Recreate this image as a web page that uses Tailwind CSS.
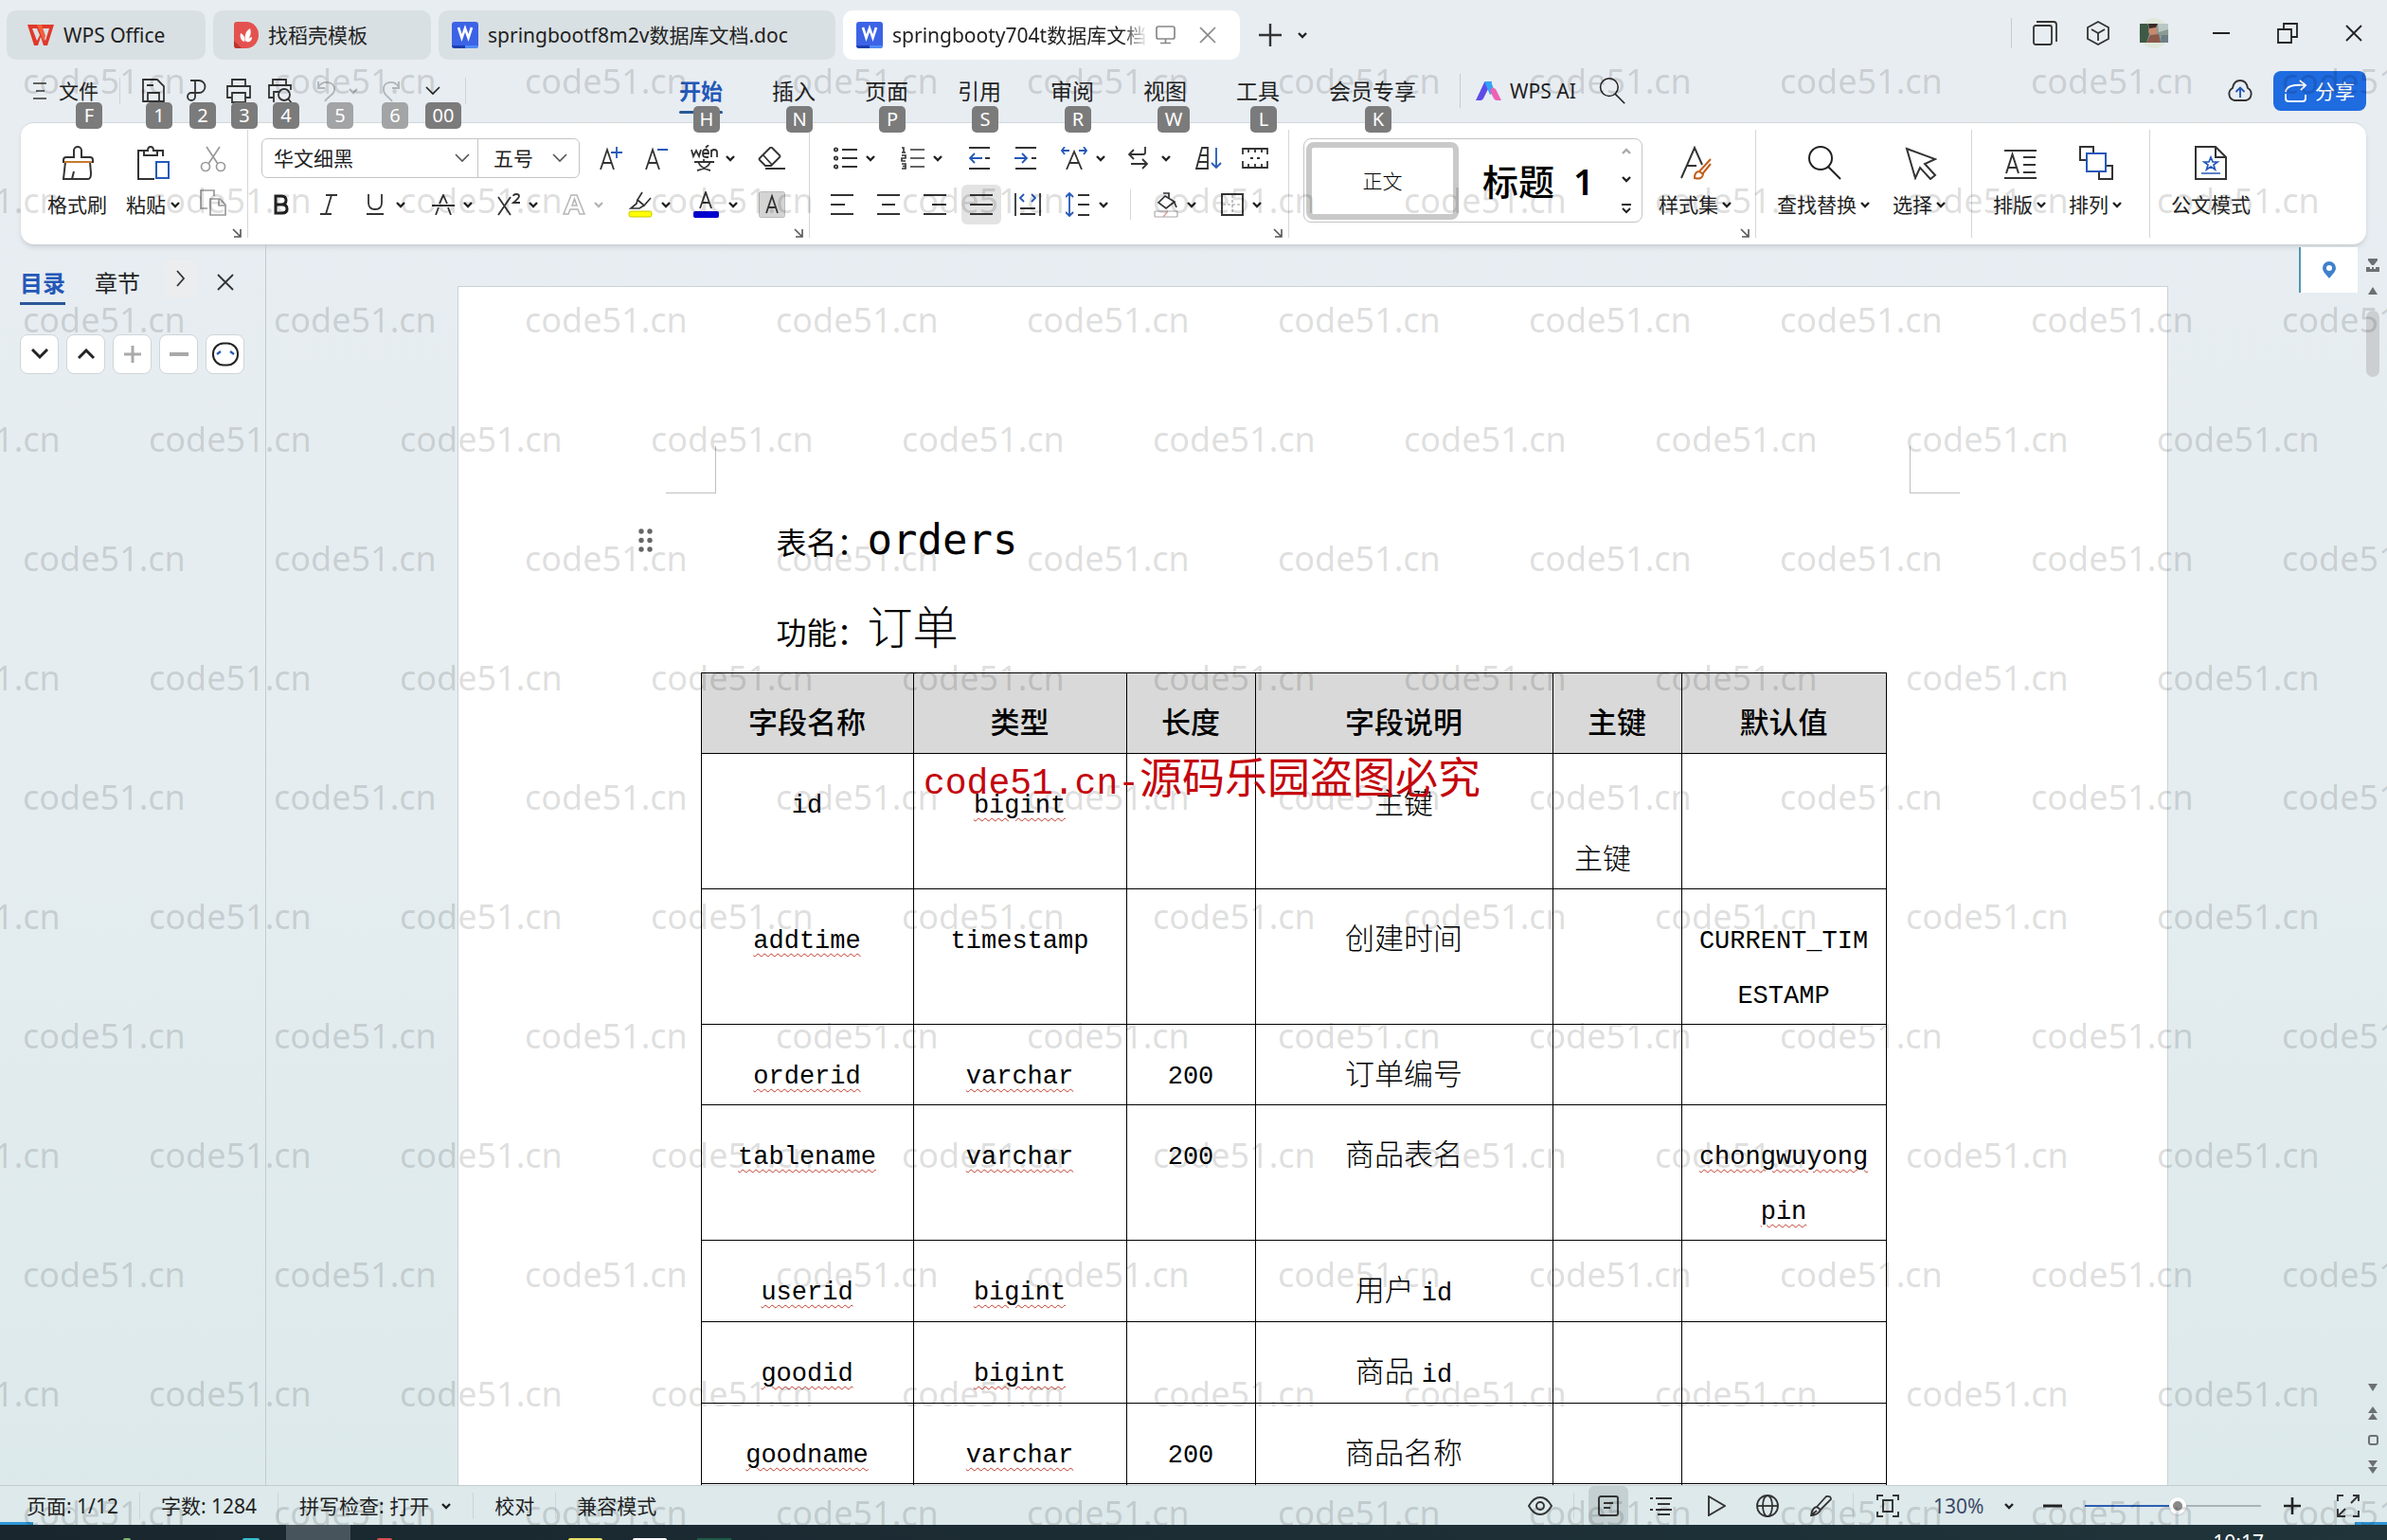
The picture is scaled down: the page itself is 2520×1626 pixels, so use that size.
<!DOCTYPE html>
<html lang="zh-CN">
<head>
<meta charset="utf-8">
<title>springbooty704t数据库文档 - WPS Office</title>
<script src="https://cdn.jsdelivr.net/npm/@tailwindcss/browser@4"></script>
</head>
<body class="relative flex h-screen flex-col overflow-hidden bg-linear-to-b from-[#e8edf2] via-[#e5edf0] to-[#dce9eb] font-['Noto_Sans','Noto_Sans_CJK_SC',sans-serif] text-[21px] leading-7 text-[#222]">

<svg class="hidden">
  <symbol id="chev" viewBox="0 0 12 8"><path d="M2 2l4 4 4-4" fill="none" stroke="currentColor" stroke-width="2.4"/></symbol>
  <symbol id="thin" viewBox="0 0 16 10"><path d="M1 1l7 7 7-7" fill="none" stroke="currentColor" stroke-width="1.6"/></symbol>
  <symbol id="corner" viewBox="0 0 10 10"><path d="M1 1l7 7M9 1v8H2" fill="none" stroke="#555" stroke-width="1.6"/></symbol>
  <symbol id="word" viewBox="0 0 28 28"><rect width="28" height="28" rx="3" fill="#3c63e6"/><path d="M0 25h14v3H3a3 3 0 0 1-3-3z" fill="#1c3fb0"/><path d="M14 25h14a3 3 0 0 1-3 3H14z" fill="#4f8bf5"/><path d="M7 6l3.500 11L14 7l3.500 10L21 6" fill="none" stroke="#fff" stroke-width="2.600"/></symbol>
  <symbol id="lens" viewBox="0 0 36 36"><circle cx="14" cy="13" r="12" fill="none" stroke="currentColor" stroke-width="2"/><path d="M22 22l13 13" stroke="currentColor" stroke-width="2"/></symbol>
</svg>

<!-- Document tabs -->
<header class="flex h-[63px] shrink-0 items-end gap-2 pl-[7px] whitespace-nowrap">
  <button class="flex h-[52px] w-[210px] items-center gap-[10px] rounded-[10px] bg-[#d9e0e3] pl-[22px]">
    <svg class="h-6 w-7" viewBox="0 0 28 24"><path d="M0 1h28l-7 22h-4l-3-9-3 9H7z" fill="#e0382c"/><path d="M5 5h5l3 7-3 6zM15 5h8l-4 13-3-7z" fill="#d9e0e3"/><path d="M10 1h5l4 12-2 6z" fill="#f0603a"/></svg>
    WPS Office
  </button>
  <button class="flex h-[52px] w-[230px] items-center gap-[10px] rounded-[10px] bg-[#d9e0e3] pl-[22px]">
    <svg class="h-7 w-[26px]" viewBox="0 0 26 28"><path d="M3 0h10a13 14 0 0 1 0 28H3a3 3 0 0 1-3-3V3a3 3 0 0 1 3-3z" fill="#e4524f"/><path d="M0 20l8 8H3a3 3 0 0 1-3-3z" fill="#b93530"/><path d="M12 21c-1-6 0-11 5-14 2 6 0 10-5 14zM11 21c-4-1-5-5-4-9 4 2 5 5 4 9zM13 21c1-3 3-4 6-5 0 4-2 6-6 5z" fill="#fff"/></svg>
    找稻壳模板
  </button>
  <button class="flex h-[52px] w-[419px] items-center gap-[10px] rounded-[10px] bg-[#d9e0e3] pl-[14px]">
    <svg class="size-7"><use href="#word"/></svg>springbootf8m2v数据库文档.doc
  </button>
  <div class="flex h-[52px] w-[419px] items-center rounded-[10px] bg-white pl-[14px]">
    <svg class="size-7 shrink-0"><use href="#word"/></svg>
    <span class="ml-[10px] w-[270px] overflow-hidden mask-r-from-90%">springbooty704t数据库文档.doc</span>
    <svg class="ml-2 h-5 w-[22px]" viewBox="0 0 22 20" fill="none" stroke="#888" stroke-width="1.700"><rect x="1" y="1" width="19" height="13" rx="2"/><path d="M10.500 14v4M5 18.500h11"/></svg>
    <button aria-label="关闭标签" class="ml-6"><svg class="size-[18px]" viewBox="0 0 18 18"><path d="M1 1l16 16M17 1L1 17" stroke="#888" stroke-width="1.700"/></svg></button>
  </div>
  <button aria-label="新建" class="ml-3 flex h-[52px] items-center"><svg class="size-6" viewBox="0 0 24 24"><path d="M12 0v24M0 12h24" stroke="#333" stroke-width="2.400"/></svg></button>
  <button aria-label="标签列表" class="ml-2 flex h-[52px] items-center"><svg class="h-2 w-3"><use href="#chev"/></svg></button>
  <div class="mr-[26px] ml-auto flex h-[52px] items-center text-[#333]">
    <i class="mb-1 h-8 w-px bg-[#c5cbcf]"></i>
    <button aria-label="窗口" class="mb-1 ml-[22px]"><svg class="size-[26px]" viewBox="0 0 26 26" fill="none" stroke="currentColor" stroke-width="1.800"><rect x="1" y="5" width="19" height="20" rx="2"/><path d="M4 1h18a3 3 0 0 1 3 3v18"/></svg></button>
    <button aria-label="应用" class="mb-1 ml-[30px]"><svg class="size-[26px]" viewBox="0 0 26 26" fill="none" stroke="currentColor" stroke-width="1.800"><path d="M13 1l11 6v12l-11 6-11-6V7zM6 9l7 4 7-4M13 13v8"/></svg></button>
    <button aria-label="账户" class="mb-1 ml-[30px]"><svg class="h-9 w-8" viewBox="0 0 32 36"><circle cx="16" cy="18" r="16" fill="#dfe8dc"/><path d="M1 8h30v20H1z" fill="#8b9a92"/><path d="M1 8h8l3 8-4 12H1z" fill="#3d5a46"/><path d="M20 8h11v6l-10 3z" fill="#b9c8c4"/><path d="M11 10h8v9l-5 3-4-5z" fill="#c58a70"/><path d="M10 8h10l-2 4-7 1z" fill="#3b2b28"/><path d="M8 28l4-8 9-1 2 9z" fill="#8a5a4a"/><path d="M24 20h7v8h-8z" fill="#6c7f86"/></svg></button>
    <button aria-label="最小化" class="mb-1 ml-[46px]"><svg class="h-1 w-[18px]" viewBox="0 0 18 4"><path d="M0 2h18" stroke="#222" stroke-width="2"/></svg></button>
    <button aria-label="还原" class="mb-1 ml-[50px]"><svg class="size-[22px]" viewBox="0 0 22 22" fill="none" stroke="#222" stroke-width="1.800"><path d="M1 7h14v14H1zM7 7V1h14v14h-6"/></svg></button>
    <button aria-label="关闭" class="mb-1 ml-[50px]"><svg class="size-[18px]" viewBox="0 0 18 18"><path d="M1 1l16 16M17 1L1 17" stroke="#222" stroke-width="1.800"/></svg></button>
  </div>
</header>

<!-- Quick access and ribbon tabs -->
<nav class="relative z-10 flex h-[66px] shrink-0 items-center pl-[34px] whitespace-nowrap">
  <button class="relative flex h-[66px] items-center gap-3">
    <svg class="h-[18px] w-4" viewBox="0 0 16 18"><path d="M1 1h14M4 9h9M1 17h14" stroke="#333" stroke-width="1.700"/></svg>文件
    <kbd class="absolute top-[45px] right-[-4px] h-7 min-w-7 rounded-[5px] bg-[#7b7b7b] px-1 text-center font-[inherit] text-xl text-white">F</kbd>
  </button>
  <i class="mx-[22px] h-7 w-px bg-[#cdd3d7]"></i>
  <button aria-label="保存" class="relative flex h-[66px] w-[46px] items-center">
    <svg class="size-[26px]" viewBox="0 0 26 26" fill="none" stroke="#333" stroke-width="1.800"><path d="M2 1h15l7 7v16H2zM7 24v-9h12v9M6 7h7"/></svg>
    <kbd class="absolute top-[45px] left-[5px] h-7 min-w-7 rounded-[5px] bg-[#7b7b7b] px-1 text-center font-[inherit] text-xl text-white">1</kbd>
  </button>
  <button aria-label="输出为PDF" class="relative flex h-[66px] w-[44px] items-center">
    <svg class="size-[26px]" viewBox="0 0 26 26" fill="none" stroke="#333" stroke-width="1.800"><path d="M6 2h9a6 6 0 0 1 0 13H7a4 4 0 1 0 4 4V2"/></svg>
    <kbd class="absolute top-[45px] left-[5px] h-7 min-w-7 rounded-[5px] bg-[#7b7b7b] px-1 text-center font-[inherit] text-xl text-white">2</kbd>
  </button>
  <button aria-label="打印" class="relative flex h-[66px] w-[44px] items-center">
    <svg class="size-[26px]" viewBox="0 0 26 26" fill="none" stroke="#333" stroke-width="1.800"><path d="M6 8V1h14v7M6 20H1V8h24v12h-5M6 15h14v10H6z"/></svg>
    <kbd class="absolute top-[45px] left-[5px] h-7 min-w-7 rounded-[5px] bg-[#7b7b7b] px-1 text-center font-[inherit] text-xl text-white">3</kbd>
  </button>
  <button aria-label="打印预览" class="relative flex h-[66px] w-[52px] items-center">
    <svg class="size-[26px]" viewBox="0 0 26 26" fill="none" stroke="#333" stroke-width="1.800"><path d="M5 7V1h14v6M5 20H1V7h23v5M6 25V14h5"/><circle cx="17" cy="17" r="6"/><path d="M21 21l4 5"/></svg>
    <kbd class="absolute top-[45px] left-[5px] h-7 min-w-7 rounded-[5px] bg-[#7b7b7b] px-1 text-center font-[inherit] text-xl text-white">4</kbd>
  </button>
  <button aria-label="撤消" class="relative flex h-[66px] w-[68px] items-center gap-3 text-[#aeb4b8]">
    <svg class="h-6 w-5" viewBox="0 0 20 24" fill="none" stroke="currentColor" stroke-width="1.800"><path d="M1 2v7h7M1 8c5-8 18-6 17 3 0 5-6 6-10 12"/></svg><svg class="h-2 w-3"><use href="#chev"/></svg>
    <kbd class="absolute top-[45px] left-[10px] h-7 min-w-7 rounded-[5px] bg-[#a2a4a5] px-1 text-center font-[inherit] text-xl text-white">5</kbd>
  </button>
  <button aria-label="恢复" class="relative flex h-[66px] w-[46px] items-center text-[#aeb4b8]">
    <svg class="h-6 w-5" viewBox="0 0 20 24" fill="none" stroke="currentColor" stroke-width="1.800"><path d="M18 2v7h-7M18 8C13 0 1 2 2 11c0 5 4 6 9 12"/></svg>
    <kbd class="absolute top-[45px] left-0 h-7 min-w-7 rounded-[5px] bg-[#a2a4a5] px-1 text-center font-[inherit] text-xl text-white">6</kbd>
  </button>
  <button aria-label="自定义快速访问" class="relative flex h-[66px] w-[42px] items-center">
    <svg class="h-[10px] w-4"><use href="#thin"/></svg>
    <kbd class="absolute top-[45px] left-0 h-7 min-w-[38px] rounded-[5px] bg-[#7b7b7b] px-1 text-center font-[inherit] text-xl text-white">00</kbd>
  </button>
  <i class="h-7 w-px bg-[#cdd3d7]"></i>
  <div class="ml-[225px] flex gap-[52px] text-[23px]">
    <a href="#" class="relative flex h-[66px] items-center font-bold text-[#2458b8]">开始<i class="absolute inset-x-0 top-[54px] h-[3px] rounded bg-[#2b5797]"></i>
      <kbd class="absolute top-[49px] left-[15px] h-7 min-w-7 rounded-[5px] bg-[#7b7b7b] px-1 text-center font-[inherit] text-xl font-normal text-white">H</kbd></a>
    <a href="#" class="relative flex h-[66px] items-center">插入<kbd class="absolute top-[49px] left-[15px] h-7 min-w-7 rounded-[5px] bg-[#7b7b7b] px-1 text-center font-[inherit] text-xl text-white">N</kbd></a>
    <a href="#" class="relative flex h-[66px] items-center">页面<kbd class="absolute top-[49px] left-[15px] h-7 min-w-7 rounded-[5px] bg-[#7b7b7b] px-1 text-center font-[inherit] text-xl text-white">P</kbd></a>
    <a href="#" class="relative flex h-[66px] items-center">引用<kbd class="absolute top-[49px] left-[15px] h-7 min-w-7 rounded-[5px] bg-[#7b7b7b] px-1 text-center font-[inherit] text-xl text-white">S</kbd></a>
    <a href="#" class="relative flex h-[66px] items-center">审阅<kbd class="absolute top-[49px] left-[15px] h-7 min-w-7 rounded-[5px] bg-[#7b7b7b] px-1 text-center font-[inherit] text-xl text-white">R</kbd></a>
    <a href="#" class="relative flex h-[66px] items-center">视图<kbd class="absolute top-[49px] left-[15px] h-7 min-w-[34px] rounded-[5px] bg-[#7b7b7b] px-1 text-center font-[inherit] text-xl text-white">W</kbd></a>
    <a href="#" class="relative flex h-[66px] items-center">工具<kbd class="absolute top-[49px] left-[15px] h-7 min-w-7 rounded-[5px] bg-[#7b7b7b] px-1 text-center font-[inherit] text-xl text-white">L</kbd></a>
    <a href="#" class="relative flex h-[66px] items-center">会员专享<kbd class="absolute top-[49px] left-[38px] h-7 min-w-7 rounded-[5px] bg-[#7b7b7b] px-1 text-center font-[inherit] text-xl text-white">K</kbd></a>
  </div>
  <i class="ml-[46px] h-9 w-px bg-[#c5cbcf]"></i>
  <button class="ml-4 flex items-center gap-2">
    <svg class="h-5 w-7" viewBox="0 0 28 20"><path d="M0 20L9 1q1-1 3-1h5l-9 18q-1 2-3 2z" fill="#5d4be8"/><path d="M9 0h7l4 11-5 3z" fill="#2fa3f5"/><path d="M17 6l4 2 6 12h-5q-2 0-3-2l-4-8z" fill="#ee62b4"/></svg>WPS AI
  </button>
  <button aria-label="搜索" class="ml-6"><svg class="size-[28px]"><use href="#lens"/></svg></button>
  <button aria-label="云同步" class="ml-auto"><svg class="h-6 w-7" viewBox="0 0 28 24" fill="none" stroke="#333" stroke-width="1.900"><path d="M8 22a7 7 0 0 1-2-13C7 3 10 1 14 1s7 2 8 8a7 7 0 0 1-2 13z"/><path d="M14 19V9M9.500 13L14 8.500l4.500 4.500" stroke="#2458b8"/></svg></button>
  <button class="mr-[22px] ml-[21px] flex h-[42px] w-[98px] items-center gap-2 rounded-lg bg-[#1f6be0] pl-3 text-white">
    <svg class="size-6" viewBox="0 0 24 24" fill="none" stroke="#fff" stroke-width="1.900"><path d="M1 15v5q0 3 3 3h15q3 0 3-3v-4M1 13C2 7 8 5 22 6M16 1l6 5-5 5"/></svg>分享
  </button>
</nav>

<!-- Ribbon -->
<section class="mx-[22px] flex h-[129px] shrink-0 overflow-hidden rounded-[14px] border-t border-[#d3d8da] bg-white whitespace-nowrap shadow-md">
  <div class="relative flex w-[239px] shrink-0 gap-5 pl-7">
    <button class="flex flex-col items-center gap-3 pt-6">
      <svg class="size-9" viewBox="0 0 36 36" fill="none" stroke="#333" stroke-width="2"><path d="M14 12V5a4 4 0 0 1 8 0v7h9q3 0 3 3v2H3v-2q0-3 3-3zM5 17L3 35h26q3 0 3-6l-1-12M12 35l2-8"/><path d="M4 17h29" stroke="#c67a2e"/></svg>格式刷
    </button>
    <button class="flex flex-col items-center gap-3 pt-6">
      <svg class="size-9" viewBox="0 0 36 36" fill="none" stroke="#333" stroke-width="2"><path d="M8 5H2v30h17M21 5h7v6M8 10V5h4q0-4 3-4t3 4h4v5z"/><path d="M21 17h13v17H21z" stroke="#2458b8"/></svg>
      <span class="flex items-center gap-1">粘贴<svg class="h-2 w-3"><use href="#chev"/></svg></span>
    </button>
    <div class="flex flex-col gap-[18px] pt-6 text-[#999]">
      <button aria-label="剪切"><svg class="size-7" viewBox="0 0 28 28" fill="none" stroke="currentColor" stroke-width="1.700"><path d="M7 1l12 18M21 1L9 19"/><circle cx="6" cy="22" r="4.500"/><circle cx="22" cy="22" r="4.500"/></svg></button>
      <button aria-label="复制"><svg class="size-7" viewBox="0 0 28 28" fill="none" stroke="currentColor" stroke-width="1.700"><path d="M8 20H1V1h14v6M11 10h10l6 6v11H11zM20 10v7h7"/></svg></button>
    </div>
    <svg class="absolute right-[6px] bottom-[7px] size-[10px]"><use href="#corner"/></svg>
  </div>
  <i class="my-[7px] w-px shrink-0 bg-[#d6d6d6]"></i>

  <div class="relative flex w-[592px] shrink-0 flex-col gap-[7px] pt-4">
    <div class="flex h-[42px] items-center pl-[14px]">
      <div class="flex h-[42px] rounded-md border border-[#c4c4c4]">
        <label class="relative flex w-[228px] items-center border-r border-[#c4c4c4]"><select aria-label="字体" class="w-full appearance-none pl-3 outline-none"><option>华文细黑</option></select><svg class="pointer-events-none absolute right-2 h-[10px] w-4 text-[#555]"><use href="#thin"/></svg></label>
        <label class="relative flex w-[106px] items-center"><select aria-label="字号" class="w-full appearance-none pl-4 outline-none"><option>五号</option></select><svg class="pointer-events-none absolute right-3 h-[10px] w-4 text-[#555]"><use href="#thin"/></svg></label>
      </div>
      <button aria-label="增大字号" class="ml-[21px] w-12"><svg class="size-6" viewBox="0 0 24 24" fill="none" stroke="#333" stroke-width="1.800"><path d="M1 24L8 3l7 21M4 17h8"/><path d="M18 0v12M12 6h12" stroke="#2458b8"/></svg></button>
      <button aria-label="减小字号" class="w-12"><svg class="size-6" viewBox="0 0 24 24" fill="none" stroke="#333" stroke-width="1.800"><path d="M1 24L8 3l7 21M4 17h8"/><path d="M13 3h11" stroke="#2458b8"/></svg></button>
      <button aria-label="拼音指南" class="flex w-[71px] items-center gap-[7px]"><svg class="h-7 w-[29px]" viewBox="0 0 29 28" fill="none" stroke="#333" stroke-width="1.800"><path d="M1 5l2 7 3-6 3 6 2-7M13 9h6q0-4-3-4t-3 4 3 4h3M16 3l3-3M22 13V5M22 8q0-3 3-3t3 3v5M4 18h21M14 15v3M8 18q3 7 13 9M21 18q-3 7-14 9"/></svg><svg class="h-2 w-3"><use href="#chev"/></svg></button>
      <button aria-label="清除格式"><svg class="h-6 w-[30px]" viewBox="0 0 30 24" fill="none" stroke="#333" stroke-width="1.800"><path d="M8 20l-6-6q-1-1 0-2L13 1q1-1 2 0l8 8q1 1 0 2l-9 9zM6 9l9 10M8 23h21"/></svg></button>
    </div>
    <div class="flex h-[42px] items-center pl-[27px]">
      <button aria-label="加粗" class="w-[49px]"><svg class="h-[22px] w-4" viewBox="0 0 16 22" fill="none" stroke="#222" stroke-width="3"><path d="M2 2h6q5 0 5 4.500T8 11H2zM2 11h7q5 0 5 4.500T9 20H2z"/></svg></button>
      <button aria-label="倾斜" class="w-[49px]"><svg class="h-[22px] w-[18px]" viewBox="0 0 18 22" fill="none" stroke="#333" stroke-width="1.800"><path d="M6 1h12M0 21h12M12 1L6 21"/></svg></button>
      <button aria-label="下划线" class="flex w-[69px] items-center gap-3"><svg class="h-[22px] w-[18px]" viewBox="0 0 18 22" fill="none" stroke="#333" stroke-width="1.800"><path d="M2 0v9q0 7 7 7t7-7V0M0 21h18"/></svg><svg class="h-2 w-3"><use href="#chev"/></svg></button>
      <button aria-label="删除线" class="flex w-[69px] items-center gap-2"><svg class="h-[22px] w-6" viewBox="0 0 24 22" fill="none" stroke="#333" stroke-width="1.800"><path d="M4 22l3-8M8 10l4-9 4 9M17 14l3 8M0 12h24"/></svg><svg class="h-2 w-3"><use href="#chev"/></svg></button>
      <button aria-label="上标" class="flex w-[69px] items-center gap-2"><svg class="h-6 w-6" viewBox="0 0 24 24" fill="none" stroke="#333" stroke-width="1.800"><path d="M1 4l13 19M14 4L1 23M17 3q0-2 3-2t3 2-6 7h7"/></svg><svg class="h-2 w-3"><use href="#chev"/></svg></button>
      <button aria-label="文字效果" class="flex w-[69px] items-center gap-2 text-[#b5b5b5]"><svg class="h-6 w-6" viewBox="0 0 24 24" fill="none" stroke="currentColor" stroke-width="1.500"><path d="M1 22L9 2h6l8 20h-5l-2-5H8l-2 5zM10 13h5l-2.500-7z"/></svg><svg class="h-2 w-3"><use href="#chev"/></svg></button>
      <button aria-label="突出显示" class="flex w-[69px] items-center gap-2"><svg class="h-7 w-[26px]" viewBox="0 0 26 28" fill="none" stroke="#333" stroke-width="1.700"><path d="M15 1l-5 8 7 6 7-8M10 9l-1 4-6 5h9l3-2 2-1"/><rect x="1" y="21" width="24" height="6" rx="2" fill="#ff0" stroke="#c9c900" stroke-width="1"/></svg><svg class="h-2 w-3"><use href="#chev"/></svg></button>
      <button aria-label="字体颜色" class="flex w-[69px] items-center gap-2"><svg class="h-7 w-7" viewBox="0 0 28 28" fill="none" stroke="#333" stroke-width="1.800"><path d="M7 18l6-17 6 17M9 12h8"/><rect x="0" y="21" width="27" height="7" rx="2" fill="#0000d0" stroke="none"/></svg><svg class="h-2 w-3"><use href="#chev"/></svg></button>
      <button aria-label="字符底纹"><svg class="size-7" viewBox="0 0 28 28" fill="none" stroke="#333" stroke-width="1.800"><rect x=".5" y=".5" width="27" height="27" rx="2" fill="#d4d4d4" stroke="#bbb" stroke-width="1"/><path d="M8 23l6-18 6 18M10 17h8"/></svg></button>
    </div>
    <svg class="absolute right-[6px] bottom-[7px] size-[10px]"><use href="#corner"/></svg>
  </div>
  <i class="my-[7px] w-px shrink-0 bg-[#d6d6d6]"></i>

  <div class="relative flex w-[505px] shrink-0 flex-col gap-[7px] pt-4">
    <div class="flex h-[42px] items-center pl-[25px]">
      <button aria-label="项目符号" class="flex w-[71px] items-center gap-2"><svg class="h-6 w-[25px]" viewBox="0 0 25 24" fill="none" stroke="#333" stroke-width="1.800"><circle cx="2.500" cy="3" r="1.700"/><circle cx="2.500" cy="12" r="1.700"/><circle cx="2.500" cy="21" r="1.700"/><path d="M9 3h16M9 12h16M9 21h16"/></svg><svg class="h-2 w-3"><use href="#chev"/></svg></button>
      <button aria-label="编号" class="flex w-[71px] items-center gap-2"><svg class="h-6 w-[25px]" viewBox="0 0 25 24" fill="none" stroke="#333" stroke-width="1.600"><path d="M10 3h15M10 12h15M10 21h15M1 1h2v5M1 6h4M1 9h4v3H1v3h4M1 18h4v5H1M2 20.500h3"/></svg><svg class="h-2 w-3"><use href="#chev"/></svg></button>
      <button aria-label="减少缩进" class="w-[49px]"><svg class="h-6 w-[25px]" viewBox="0 0 25 24" fill="none" stroke="#333" stroke-width="1.800"><path d="M1 1h22M1 23h22M18 12h5"/><path d="M15 12H2M7 7l-5 5 5 5" stroke="#2458b8"/></svg></button>
      <button aria-label="增加缩进" class="w-[49px]"><svg class="h-6 w-[25px]" viewBox="0 0 25 24" fill="none" stroke="#333" stroke-width="1.800"><path d="M1 1h22M1 23h22M18 12h5"/><path d="M0 12h13M8 7l5 5-5 5" stroke="#2458b8"/></svg></button>
      <button aria-label="中文版式" class="flex w-[71px] items-center gap-2"><svg class="h-6 w-7" viewBox="0 0 28 24" fill="none" stroke="#333" stroke-width="1.800"><path d="M6 24l8-19 8 19M9 17h10"/><path d="M9 4H1M4 0L1 4l3 4M19 4h8M24 0l3 4-3 4" stroke="#2458b8"/></svg><svg class="h-2 w-3"><use href="#chev"/></svg></button>
      <button aria-label="文字方向" class="flex w-[71px] items-center gap-3"><svg class="h-6 w-[22px]" viewBox="0 0 22 24" fill="none" stroke="#333" stroke-width="1.800"><path d="M18 0v6q0 2-2 2H1M6 3L1 8l5 5M3 18h17M15 13l5 5-5 5"/></svg><svg class="h-2 w-3"><use href="#chev"/></svg></button>
      <button aria-label="排序" class="w-[49px]"><svg class="h-6 w-7" viewBox="0 0 28 24" fill="none" stroke="#333" stroke-width="1.800"><path d="M1 23L7 1h6v22zM5 9h8M3 16h10"/><path d="M22 1v21M17 17l5 5 5-5" stroke="#2458b8"/></svg></button>
      <button aria-label="显示编辑标记"><svg class="h-6 w-7" viewBox="0 0 28 24" fill="none" stroke="#333" stroke-width="1.800"><path d="M1 8V2h26v6M1 15v7h26v-7M7 2v4M14 2v4M21 2v4M7 22v-4M14 22v-4M21 22v-4M9 12h3M16 12h3"/></svg></button>
    </div>
    <div class="flex h-[42px] items-center pl-[9px]">
      <button aria-label="左对齐" class="flex w-[49px] justify-center"><svg class="h-[22px] w-6" viewBox="0 0 24 22"><path d="M0 1h24M0 11h15M0 21h24" stroke="#333" stroke-width="1.900"/></svg></button>
      <button aria-label="居中" class="flex w-[49px] justify-center"><svg class="h-[22px] w-6" viewBox="0 0 24 22"><path d="M0 1h24M5 11h14M0 21h24" stroke="#333" stroke-width="1.900"/></svg></button>
      <button aria-label="右对齐" class="flex w-[49px] justify-center"><svg class="h-[22px] w-6" viewBox="0 0 24 22"><path d="M0 1h24M9 11h15M0 21h24" stroke="#333" stroke-width="1.900"/></svg></button>
      <button aria-label="两端对齐" class="flex w-[49px] justify-center"><span class="flex h-[42px] w-[42px] items-center justify-center rounded-md bg-[#e3e3e3]"><svg class="h-[22px] w-6" viewBox="0 0 24 22"><path d="M0 1h24M0 11h24M0 21h24" stroke="#333" stroke-width="1.900"/></svg></span></button>
      <button aria-label="分散对齐" class="flex w-[49px] justify-center"><svg class="h-6 w-7" viewBox="0 0 28 24" fill="none" stroke="#333" stroke-width="1.800"><path d="M1 0v24M27 0v24M6 16h16M6 22h16"/><path d="M10 1L6 5l4 4M18 1l4 4-4 4" stroke="#2458b8"/></svg></button>
      <button aria-label="行距" class="ml-4 flex w-[68px] items-center gap-2"><svg class="h-[26px] w-[26px]" viewBox="0 0 26 26" fill="none" stroke="#333" stroke-width="1.800"><path d="M13 3h12M13 13h12M13 24h12"/><path d="M4 1v24M0 5l4-4 4 4M0 21l4 4 4-4" stroke="#2458b8"/></svg><svg class="h-2 w-3"><use href="#chev"/></svg></button>
      <i class="mr-6 h-8 w-px bg-[#d6d6d6]"></i>
      <button aria-label="底纹颜色" class="flex w-[71px] items-center gap-2"><svg class="h-[28px] w-[26px]" viewBox="0 0 26 28" fill="none" stroke="#333" stroke-width="1.700"><path d="M10 2h6v6M12 5L5 12l8 6 9-7zM22 12l2 5"/><rect x="1" y="21" width="24" height="6" rx="1" stroke="#aaa" stroke-width="1.200"/><path d="M10 27l5-6" stroke="#d99" stroke-width="1.200"/></svg><svg class="h-2 w-3"><use href="#chev"/></svg></button>
      <button aria-label="边框" class="flex items-center gap-2"><svg class="h-6 w-6" viewBox="0 0 24 24" fill="none" stroke="#333" stroke-width="1.900"><path d="M1 1h22v22H1z"/><path d="M12 2v20M2 12h20" stroke="#999" stroke-width="1.200" stroke-dasharray="3 2"/></svg><svg class="h-2 w-3"><use href="#chev"/></svg></button>
    </div>
    <svg class="absolute right-[6px] bottom-[7px] size-[10px]"><use href="#corner"/></svg>
  </div>
  <i class="my-[7px] w-px shrink-0 bg-[#d6d6d6]"></i>

  <div class="relative flex w-[492px] shrink-0 gap-[17px] pl-[15px]">
    <div class="mt-4 flex h-[89px] w-[358px] items-center rounded-lg border border-[#c4c4c4] pl-[2px]">
      <button class="h-[82px] w-[161px] rounded-lg border-[6px] border-[#c9c9c9] bg-white font-light text-black">正文</button>
      <button class="ml-[25px] flex gap-5 text-[38px] leading-[48px] font-medium text-black"><span>标题</span><span class="font-semibold">1</span></button>
      <div class="mr-[10px] ml-auto flex h-[70px] flex-col justify-between">
        <button aria-label="上一行" class="flex"><svg class="h-2 w-3 rotate-180 text-[#aaa]"><use href="#chev"/></svg></button>
        <button aria-label="下一行" class="flex"><svg class="h-2 w-3"><use href="#chev"/></svg></button>
        <button aria-label="更多样式" class="flex"><svg class="h-3 w-3" viewBox="0 0 12 12" fill="none" stroke="#222" stroke-width="2"><path d="M1 2h10M2 6l4 4 4-4"/></svg></button>
      </div>
    </div>
    <button class="flex flex-col items-center gap-3 pt-6">
      <svg class="size-9" viewBox="0 0 36 36" fill="none" stroke="#333" stroke-width="2"><path d="M3 34L17 2l8 18M8 21h11"/><path d="M34 14L22 27M34 19l-9 11M22 27q-5 0-5 7 8 2 9-4z" stroke="#c2601c"/></svg>
      <span class="flex items-center gap-[3px]">样式集<svg class="h-2 w-3"><use href="#chev"/></svg></span>
    </button>
    <svg class="absolute right-[6px] bottom-[7px] size-[10px]"><use href="#corner"/></svg>
  </div>
  <i class="my-[7px] w-px shrink-0 bg-[#d6d6d6]"></i>

  <div class="flex w-[227px] shrink-0 gap-[23px] pl-[22px]">
    <button class="flex flex-col items-center gap-3 pt-6"><svg class="size-9"><use href="#lens"/></svg><span class="flex items-center gap-[3px]">查找替换<svg class="h-2 w-3"><use href="#chev"/></svg></span></button>
    <button class="flex flex-col items-center gap-3 pt-6"><svg class="size-9" viewBox="0 0 36 36" fill="none" stroke="#333" stroke-width="2"><path d="M4 3l30 11-11 5 11 12-5 4-11-12-5 11z"/></svg><span class="flex items-center gap-[3px]">选择<svg class="h-2 w-3"><use href="#chev"/></svg></span></button>
  </div>
  <i class="my-[7px] w-px shrink-0 bg-[#d6d6d6]"></i>
  <div class="flex w-[187px] shrink-0 gap-[23px] pl-[22px]">
    <button class="flex flex-col items-center gap-3 pt-6"><svg class="size-9" viewBox="0 0 36 36" fill="none" stroke="#333" stroke-width="2"><path d="M1 5h34M1 34h34M3 29L9.500 9 16 29M5 23h9M21 12h13M21 20h13M21 28h13"/></svg><span class="flex items-center gap-[3px]">排版<svg class="h-2 w-3"><use href="#chev"/></svg></span></button>
    <button class="flex flex-col items-center gap-3 pt-6"><svg class="size-9" viewBox="0 0 36 36" fill="none" stroke="#333" stroke-width="2"><path d="M7 15H1V1h14v7M28 21h7v14H21v-7"/><path d="M8 8h20v19H8z" stroke="#2458b8"/></svg><span class="flex items-center gap-[3px]">排列<svg class="h-2 w-3"><use href="#chev"/></svg></span></button>
  </div>
  <i class="my-[7px] w-px shrink-0 bg-[#d6d6d6]"></i>
  <div class="flex pl-[22px]">
    <button class="flex flex-col items-center gap-3 pt-6"><svg class="size-9" viewBox="0 0 36 36" fill="none" stroke="#333" stroke-width="2"><path d="M2 1h21l11 11v23H2zM23 1v11h11"/><path d="M18 12l2 5h5l-4 3 1.500 5-4.500-3-4.500 3 1.500-5-4-3h5zM8 29h20" stroke="#2458b8" stroke-width="1.700"/></svg>公文模式</button>
  </div>
</section>

<!-- Workspace -->
<main class="flex min-h-0 flex-1">
  <aside class="w-[281px] shrink-0 border-r border-[#c3cbcf] pt-4">
    <div class="flex items-start pl-[21px] text-2xl leading-[34px]">
      <a href="#" class="mt-2 border-b-[3px] border-[#2b5797] pb-[3px] font-bold text-[#2458b8]">目录</a>
      <a href="#" class="mt-2 ml-[31px]">章节</a>
      <button aria-label="更多" class="ml-[26px] flex h-10 w-[33px] items-center justify-center bg-[#ecedee]"><svg class="h-[18px] w-[10px]" viewBox="0 0 10 18"><path d="M1 1l7 8-7 8" fill="none" stroke="#333" stroke-width="1.800"/></svg></button>
      <button aria-label="关闭窗格" class="mt-[15px] ml-[22px] flex"><svg class="size-[18px]" viewBox="0 0 18 18"><path d="M1 1l16 16M17 1L1 17" stroke="#333" stroke-width="1.800"/></svg></button>
    </div>
    <div class="mt-[31px] flex gap-2 pl-[21px]">
      <button aria-label="展开" class="flex h-[42px] w-[41px] items-center justify-center rounded-lg border border-[#cfd5d8] bg-white"><svg class="h-3 w-[18px]" viewBox="0 0 18 12"><path d="M1 1l8 8 8-8" fill="none" stroke="#222" stroke-width="3"/></svg></button>
      <button aria-label="收起" class="flex h-[42px] w-[41px] items-center justify-center rounded-lg border border-[#cfd5d8] bg-white"><svg class="h-3 w-[18px]" viewBox="0 0 18 12"><path d="M1 10l8-8 8 8" fill="none" stroke="#222" stroke-width="3"/></svg></button>
      <button aria-label="升级" class="flex h-[42px] w-[41px] items-center justify-center rounded-lg border border-[#cfd5d8] bg-white"><svg class="size-[18px]" viewBox="0 0 18 18"><path d="M9 0v18M0 9h18" stroke="#a9a9a9" stroke-width="3"/></svg></button>
      <button aria-label="降级" class="flex h-[42px] w-[41px] items-center justify-center rounded-lg border border-[#cfd5d8] bg-white"><svg class="h-1 w-5" viewBox="0 0 20 4"><path d="M0 2h20" stroke="#a9a9a9" stroke-width="4"/></svg></button>
      <button aria-label="智能识别目录" class="flex h-[42px] w-[41px] items-center justify-center rounded-lg border border-[#cfd5d8] bg-white"><svg class="h-[26px] w-7" viewBox="0 0 28 26" fill="none"><rect x="1" y="1.500" width="26" height="23" rx="11" stroke="#222" stroke-width="2"/><path d="M5 13l4-3M23 13l-4-3" stroke="#2458b8" stroke-width="2.200"/></svg></button>
    </div>
  </aside>

  <div class="relative flex min-w-0 flex-1 justify-center overflow-hidden pt-11">
    <article class="w-full max-w-[1806px] shrink-0 border border-b-0 border-[#c9d1d5] bg-white">
      <div class="flex h-[218px] items-end justify-between px-[219px]">
        <i class="h-[50px] w-[53px] border-r border-b border-[#bfbfbf]"></i>
        <i class="h-[50px] w-[53px] border-b border-l border-[#bfbfbf]"></i>
      </div>
      <div class="flex h-[98px] items-center pl-[190px] text-[32px] text-black">
        <svg class="h-[27px] w-4" viewBox="0 0 16 27" fill="#666"><circle cx="3" cy="4" r="2.700"/><circle cx="12" cy="4" r="2.700"/><circle cx="3" cy="13.500" r="2.700"/><circle cx="12" cy="13.500" r="2.700"/><circle cx="3" cy="23" r="2.700"/><circle cx="12" cy="23" r="2.700"/></svg>
        <p class="ml-[130px] font-['Noto_Sans_CJK_SC',sans-serif] leading-[98px]">表名：<span class="font-['DejaVu_Sans_Mono',monospace] text-[44px]">orders</span></p>
      </div>
      <p class="h-[91px] pl-[336px] font-['Noto_Sans_CJK_SC',sans-serif] text-[32px] leading-[81px] text-black">功能：<span class="text-[48px] font-light">订单</span></p>
      <table class="ml-[256px] w-[1251px] table-fixed border-collapse text-center font-['Liberation_Mono','Noto_Sans_CJK_SC',monospace] text-[27px] leading-[58px] text-black [&_td]:border [&_td]:border-black [&_td]:pt-[26px] [&_td]:align-top [&_th]:border [&_th]:border-black [&_th]:bg-[#d9d9d9] [&_th]:pt-[26px] [&_th]:text-[31px] [&_th]:font-medium [&_u]:decoration-[#c0392b] [&_u]:decoration-wavy [&_u]:decoration-1 [&_u]:underline-offset-[5px] [&_td:nth-child(4)]:font-light [&_td:nth-child(4)]:text-[31px] [&_td]:p-0 [&_th]:p-0">
        <colgroup><col class="w-[224px]"><col class="w-[225px]"><col class="w-[136px]"><col class="w-[314px]"><col class="w-[136px]"><col class="w-[216px]"></colgroup>
        <thead><tr><th>字段名称</th><th>类型</th><th>长度</th><th>字段说明</th><th>主键</th><th>默认值</th></tr></thead>
        <tbody>
          <tr><td>id</td><td><u>bigint</u></td><td></td><td>主键</td><td><p class="pt-[58px] pr-[30px] text-[30px] font-light">主键</p></td><td></td></tr>
          <tr><td><u>addtime</u></td><td>timestamp</td><td></td><td>创建时间</td><td></td><td>CURRENT_TIM<br>ESTAMP</td></tr>
          <tr><td><u>orderid</u></td><td><u>varchar</u></td><td>200</td><td>订单编号</td><td></td><td></td></tr>
          <tr><td><u>tablename</u></td><td><u>varchar</u></td><td>200</td><td>商品表名</td><td></td><td><u>chongwuyong<br>pin</u></td></tr>
          <tr><td><u>userid</u></td><td><u>bigint</u></td><td></td><td><span class="mr-2">用户</span><span class="text-[27px]">id</span></td><td></td><td></td></tr>
          <tr><td><u>goodid</u></td><td><u>bigint</u></td><td></td><td><span class="mr-2">商品</span><span class="text-[27px]">id</span></td><td></td><td></td></tr>
          <tr><td><u>goodname</u></td><td><u>varchar</u></td><td>200</td><td>商品名称</td><td></td><td></td></tr>
          <tr><td class="h-[84px]"></td><td></td><td></td><td></td><td></td><td></td></tr>
        </tbody>
      </table>
    </article>
    <button aria-label="导航" class="absolute top-[3px] right-px flex h-12 w-[62px] items-center justify-center border-l-2 border-[#4d9ab0] bg-white"><svg class="h-[18px] w-[14px]" viewBox="0 0 14 18"><path d="M7 18C4 14 0 11 0 7a7 7 0 0 1 14 0c0 4-4 7-7 11zM7 4a3 3 0 1 0 0 6 3 3 0 0 0 0-6z" fill="#4080cc"/></svg></button>
  </div>

  <div class="flex w-[30px] shrink-0 flex-col items-center pt-[15px] pb-3 text-[#6d7072]">
    <svg class="h-[14px] w-[14px]" viewBox="0 0 14 14" fill="currentColor"><path d="M2 0h10v2L8 7H6L2 2zM0 9h4v2h2V9h2v2h2V9h4v5H0z"/></svg>
    <svg class="mt-4 h-2 w-[10px]" viewBox="0 0 10 8" fill="currentColor"><path d="M5 0l5 8H0z"/></svg>
    <i class="mt-[17px] h-[70px] w-[14px] rounded-full bg-[#cbcfd1]"></i>
    <svg class="mt-auto h-2 w-[10px]" viewBox="0 0 10 8" fill="currentColor"><path d="M5 8l5-8H0z"/></svg>
    <svg class="mt-4 h-[14px] w-[10px]" viewBox="0 0 10 14" fill="currentColor"><path d="M5 0l5 7H0zM5 7l5 7H0z"/></svg>
    <svg class="mt-4 h-[11px] w-[11px]" viewBox="0 0 11 11"><rect x="1" y="1" width="9" height="9" rx="2" fill="none" stroke="currentColor" stroke-width="2"/></svg>
    <svg class="mt-4 h-[14px] w-[10px]" viewBox="0 0 10 14" fill="currentColor"><path d="M5 7l5-7H0zM5 14l5-7H0z"/></svg>
  </div>
</main>

<!-- Status bar -->
<footer class="relative flex h-[42px] shrink-0 items-center border-t border-[#c3cdd0] bg-[#dde9eb] pl-7 whitespace-nowrap">
  <span>页面: 1/12</span><i class="mx-[22px] h-7 w-px bg-[#cbd5d8]"></i>
  <span>字数: 1284</span><i class="mx-[22px] h-7 w-px bg-[#cbd5d8]"></i>
  <button class="flex items-center gap-3">拼写检查: 打开<svg class="h-2 w-3"><use href="#chev"/></svg></button><i class="mx-[22px] h-7 w-px bg-[#cbd5d8]"></i>
  <button>校对</button><i class="mx-[22px] h-7 w-px bg-[#cbd5d8]"></i>
  <span>兼容模式</span>
  <div class="mr-[29px] ml-auto flex items-center text-[#333]">
    <button aria-label="护眼模式"><svg class="h-[22px] w-[26px]" viewBox="0 0 26 22" fill="none" stroke="currentColor" stroke-width="1.900"><path d="M1 11Q6 2 13 2t12 9q-5 9-12 9T1 11z"/><circle cx="13" cy="11" r="4"/></svg></button>
    <i class="mr-[15px] ml-[22px] h-7 w-px bg-[#cbd5d8]"></i>
    <button aria-label="页面视图" class="flex h-[42px] w-[42px] items-center justify-center rounded-md bg-[#c4d0d2]"><svg class="size-[22px]" viewBox="0 0 22 22" fill="none" stroke="currentColor" stroke-width="1.900"><rect x="1" y="1" width="20" height="20" rx="2"/><path d="M6 8h10M6 13h7"/></svg></button>
    <button aria-label="大纲" class="ml-[23px]"><svg class="h-5 w-6" viewBox="0 0 24 20" fill="none" stroke="currentColor" stroke-width="1.900"><path d="M0 2h3M6 2h17M8 8h13M0 14h3M6 14h17M8 19h13"/></svg></button>
    <button aria-label="阅读" class="ml-9"><svg class="h-[22px] w-5" viewBox="0 0 20 22" fill="none" stroke="currentColor" stroke-width="1.900"><path d="M2 1l17 10L2 21z"/></svg></button>
    <button aria-label="Web版式" class="ml-8"><svg class="size-6" viewBox="0 0 24 24" fill="none" stroke="currentColor" stroke-width="1.800"><circle cx="12" cy="12" r="11"/><ellipse cx="12" cy="12" rx="5" ry="11"/><path d="M1 12h22"/></svg></button>
    <button aria-label="写作模式" class="ml-8"><svg class="size-6" viewBox="0 0 24 24" fill="none" stroke="currentColor" stroke-width="1.800"><path d="M8 13L18 2q5-1 5 3L12 16zM8 13q-5 1-6 9 7 0 10-6M2 22l6-5"/></svg></button>
    <i class="mr-6 ml-[22px] h-7 w-px bg-[#cbd5d8]"></i>
    <button aria-label="适应页面"><svg class="size-6" viewBox="0 0 24 24" fill="none" stroke="currentColor" stroke-width="1.900"><path d="M1 6V1h6M17 1h6v5M23 18v5h-6M7 23H1v-5M7 6h10v12H7z"/></svg></button>
    <button class="ml-9 flex w-[86px] items-center justify-between text-[#3d4a68]"><span>130%</span><svg class="h-2 w-3 text-[#222]"><use href="#chev"/></svg></button>
    <button aria-label="缩小" class="ml-[30px]"><svg class="h-1 w-5" viewBox="0 0 20 4"><path d="M0 2h20" stroke="#222" stroke-width="3"/></svg></button>
    <input type="range" aria-label="缩放" min="0" max="100" value="53" class="ml-6 h-5 w-[186px] appearance-none bg-linear-to-r from-[#2b5fb0] from-53% to-[#aab4b7] to-53% bg-[length:100%_2px] bg-center bg-no-repeat [&::-webkit-slider-thumb]:size-[18px] [&::-webkit-slider-thumb]:appearance-none [&::-webkit-slider-thumb]:rounded-full [&::-webkit-slider-thumb]:border-[4px] [&::-webkit-slider-thumb]:border-white [&::-webkit-slider-thumb]:bg-[#8a8a8a] [&::-webkit-slider-thumb]:shadow">
    <button aria-label="放大" class="ml-6"><svg class="size-[18px]" viewBox="0 0 18 18"><path d="M9 0v18M0 9h18" stroke="#222" stroke-width="2.600"/></svg></button>
    <button aria-label="全屏" class="ml-[38px]"><svg class="size-6" viewBox="0 0 24 24" fill="none" stroke="currentColor" stroke-width="1.900"><path d="M1 7V1h6M17 1h6v6M23 1l-8 8M23 17v6h-6M1 15v8h8M1 23l8-8"/></svg></button>
  </div>
  <i class="absolute bottom-0 left-0 h-[3px] w-[35px] bg-[#2f96d6]"></i>
  <i class="absolute right-0 bottom-0 h-[3px] w-[34px] bg-[#2f96d6]"></i>
</footer>

<!-- Desktop taskbar, mostly below the screen edge -->
<div class="relative flex h-4 shrink-0 items-end overflow-hidden bg-linear-to-r from-[#19262e] to-[#20343a]">
  <i class="ml-[130px] h-[2px] w-2 rounded-t-full bg-[#7cb56a]"></i>
  <i class="ml-[118px] h-[2px] w-[18px] rounded-t-full bg-[#35bfcf]"></i>
  <i class="ml-7 h-4 w-[68px] bg-[#47545b]"></i>
  <i class="ml-7 h-[2px] w-4 rounded-t-full bg-[#d0504c]"></i>
  <i class="ml-[186px] h-[2px] w-9 rounded-t bg-[#e6dd6b]"></i>
  <i class="ml-8 h-[2px] w-9 rounded-t bg-white"></i>
  <i class="ml-8 h-[2px] w-9 bg-[#1f5a45]"></i>
  <span class="mr-[130px] ml-auto h-[10px] leading-6 text-white">10:17</span>
</div>

<!-- Site watermark over the whole window -->
<div id="marks" aria-hidden="true" class="pointer-events-none absolute inset-x-0 top-0 bottom-4 z-20 overflow-hidden pt-[23px] text-[36px] leading-[126px] text-black/14"></div>
<div class="pointer-events-none absolute inset-0 z-30 flex items-center justify-center pt-7 pl-[18px] whitespace-nowrap text-[#c4060d]">
  <p class="font-['Liberation_Mono','Noto_Sans_CJK_SC',monospace] text-[45px]"><span class="text-[38px]">code51.cn-</span>源码乐园盗图必究</p>
</div>
<script>
  const marks = document.getElementById('marks');
  for (let r = 0; r < 13; r++) {
    const row = document.createElement('div');
    row.className = r % 2 ? 'flex -ml-[108px]' : 'flex ml-[24px]';
    for (let c = 0; c < 10; c++) {
      const s = document.createElement('span');
      s.className = 'w-[265px] shrink-0';
      s.textContent = 'code51.cn';
      row.append(s);
    }
    marks.append(row);
  }
</script>
</body>
</html>
